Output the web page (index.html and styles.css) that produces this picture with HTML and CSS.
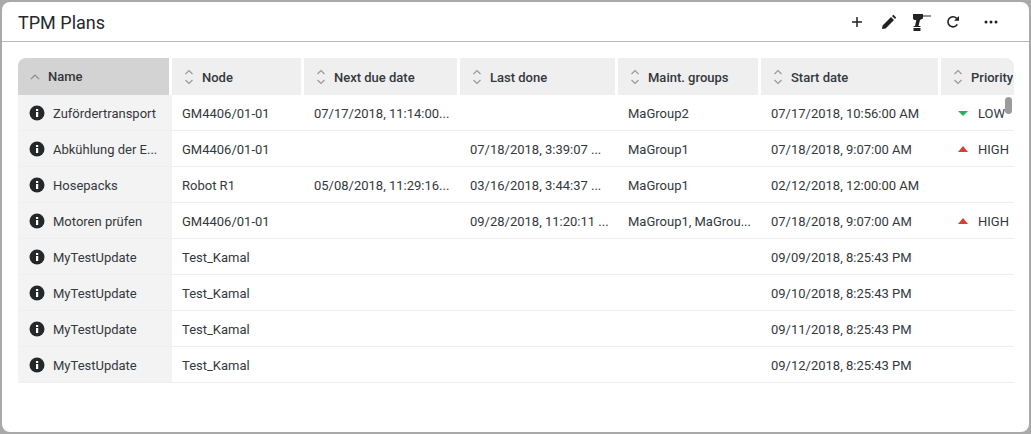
FILE: index.html
```html
<!doctype html>
<html>
<head>
<title>TPM Plans</title>
<link rel="stylesheet" href="styles.css">
</head>
<body>
<svg class="defs" width="0" height="0">
	<symbol id="sort" viewBox="0 0 10 18">
		<path d="M1.5 6 L5 2.5 L8.5 6 M1.5 12 L5 15.5 L8.5 12" fill="none" stroke="#999" stroke-width="1.2"/>
	</symbol>
	<symbol id="info" viewBox="0 0 16 16">
		<circle cx="8" cy="8" r="7.5" fill="#25282b"/>
		<rect x="7" y="7" width="2.2" height="5" fill="#fff"/>
		<rect x="7" y="4" width="2.2" height="2" fill="#fff"/>
	</symbol>
</svg>
<div class="card">
	<div class="head">
		<h1>TPM Plans</h1>
		<div class="tools">
			<svg class="add" width="12" height="12" viewBox="0 0 12 12"><path d="M6 1V11M1 6H11" stroke="#222" stroke-width="1.5"/></svg>
			<svg class="edit" width="16" height="16" viewBox="0 0 16 16"><path d="M1 15 L1.6 11.4 L10 3 L13 6 L4.6 14.4 Z M11 2 L12.4 0.8 L15.2 3.6 L14 5 Z" fill="#222"/></svg>
			<svg class="drill" width="20" height="18" viewBox="0 0 20 18"><path d="M1 0H11V1.6H19V2.4H11V4.5L8 6L6.5 12H8.5V13H1.6V12H3L4.3 6H2L1 4.5Z M1.5 14H8.5V17H1.5Z" fill="#222"/></svg>
			<svg class="reload" width="14" height="14" viewBox="0 0 14 14"><path d="M11.3 9.3 A5 5 0 1 1 10.6 3.4" fill="none" stroke="#222" stroke-width="1.6"/><path d="M8 5.8H13V1Z" fill="#222"/></svg>
			<svg class="more" width="14" height="4" viewBox="0 0 14 4"><circle cx="2" cy="2" r="1.5" fill="#222"/><circle cx="7" cy="2" r="1.5" fill="#222"/><circle cx="12" cy="2" r="1.5" fill="#222"/></svg>
		</div>
	</div>
	<div class="table">
		<div class="row toprow">
			<div class="th c1 sorted"><svg class="up" width="10" height="6" viewBox="0 0 10 6"><path d="M1 5 L5 1 L9 5" fill="none" stroke="#8d8d8d" stroke-width="1.2"/></svg><span>Name</span></div>
			<div class="th c2"><svg class="sort"><use href="#sort"/></svg><span>Node</span></div>
			<div class="th c3"><svg class="sort"><use href="#sort"/></svg><span>Next due date</span></div>
			<div class="th c4"><svg class="sort"><use href="#sort"/></svg><span>Last done</span></div>
			<div class="th c5"><svg class="sort"><use href="#sort"/></svg><span>Maint. groups</span></div>
			<div class="th c6"><svg class="sort"><use href="#sort"/></svg><span>Start date</span></div>
			<div class="th c7"><svg class="sort"><use href="#sort"/></svg><span>Priority</span></div>
		</div>
		<div class="row">
			<div class="td c1"><svg class="info"><use href="#info"/></svg><span class="txt">Zufördertransport</span></div>
			<div class="td c2"><span class="txt">GM4406/01-01</span></div>
			<div class="td c3"><span class="txt">07/17/2018, 11:14:00...</span></div>
			<div class="td c4"></div>
			<div class="td c5"><span class="txt">MaGroup2</span></div>
			<div class="td c6"><span class="txt">07/17/2018, 10:56:00 AM</span></div>
			<div class="td c7"><i class="low"></i><span>LOW</span></div>
		</div>
		<div class="row">
			<div class="td c1"><svg class="info"><use href="#info"/></svg><span class="txt">Abkühlung der E...</span></div>
			<div class="td c2"><span class="txt">GM4406/01-01</span></div>
			<div class="td c3"></div>
			<div class="td c4"><span class="txt">07/18/2018, 3:39:07 ...</span></div>
			<div class="td c5"><span class="txt">MaGroup1</span></div>
			<div class="td c6"><span class="txt">07/18/2018, 9:07:00 AM</span></div>
			<div class="td c7"><i class="high"></i><span>HIGH</span></div>
		</div>
		<div class="row">
			<div class="td c1"><svg class="info"><use href="#info"/></svg><span class="txt">Hosepacks</span></div>
			<div class="td c2"><span class="txt">Robot R1</span></div>
			<div class="td c3"><span class="txt">05/08/2018, 11:29:16...</span></div>
			<div class="td c4"><span class="txt">03/16/2018, 3:44:37 ...</span></div>
			<div class="td c5"><span class="txt">MaGroup1</span></div>
			<div class="td c6"><span class="txt">02/12/2018, 12:00:00 AM</span></div>
			<div class="td c7"></div>
		</div>
		<div class="row">
			<div class="td c1"><svg class="info"><use href="#info"/></svg><span class="txt">Motoren prüfen</span></div>
			<div class="td c2"><span class="txt">GM4406/01-01</span></div>
			<div class="td c3"></div>
			<div class="td c4"><span class="txt">09/28/2018, 11:20:11 ...</span></div>
			<div class="td c5"><span class="txt">MaGroup1, MaGrou...</span></div>
			<div class="td c6"><span class="txt">07/18/2018, 9:07:00 AM</span></div>
			<div class="td c7"><i class="high"></i><span>HIGH</span></div>
		</div>
		<div class="row">
			<div class="td c1"><svg class="info"><use href="#info"/></svg><span class="txt">MyTestUpdate</span></div>
			<div class="td c2"><span class="txt">Test_Kamal</span></div>
			<div class="td c3"></div>
			<div class="td c4"></div>
			<div class="td c5"></div>
			<div class="td c6"><span class="txt">09/09/2018, 8:25:43 PM</span></div>
			<div class="td c7"></div>
		</div>
		<div class="row">
			<div class="td c1"><svg class="info"><use href="#info"/></svg><span class="txt">MyTestUpdate</span></div>
			<div class="td c2"><span class="txt">Test_Kamal</span></div>
			<div class="td c3"></div>
			<div class="td c4"></div>
			<div class="td c5"></div>
			<div class="td c6"><span class="txt">09/10/2018, 8:25:43 PM</span></div>
			<div class="td c7"></div>
		</div>
		<div class="row">
			<div class="td c1"><svg class="info"><use href="#info"/></svg><span class="txt">MyTestUpdate</span></div>
			<div class="td c2"><span class="txt">Test_Kamal</span></div>
			<div class="td c3"></div>
			<div class="td c4"></div>
			<div class="td c5"></div>
			<div class="td c6"><span class="txt">09/11/2018, 8:25:43 PM</span></div>
			<div class="td c7"></div>
		</div>
		<div class="row">
			<div class="td c1"><svg class="info"><use href="#info"/></svg><span class="txt">MyTestUpdate</span></div>
			<div class="td c2"><span class="txt">Test_Kamal</span></div>
			<div class="td c3"></div>
			<div class="td c4"></div>
			<div class="td c5"></div>
			<div class="td c6"><span class="txt">09/12/2018, 8:25:43 PM</span></div>
			<div class="td c7"></div>
		</div>
		<div class="thumb"></div>
	</div>
</div>
</body>
</html>
```
FILE: styles.css
```css
html, body {
	height: 100%;
}
body {
	margin: 0;
	padding: 2px;
	box-sizing: border-box;
	background-color: #a9a9a9;
	font-family: Roboto, sans-serif;
	font-size: 13px;
	color: #33383c;
	overflow: hidden;
}
.defs {
	position: absolute;
}
.card {
	height: 100%;
	background: white;
	border-radius: 8px;
	overflow: hidden;
}
.head {
	display: flex;
	align-items: center;
	justify-content: space-between;
	height: 39px;
	border-bottom: 1px solid #b9b9b9;
	padding: 0 31px 0 16px;
}
h1 {
	margin: 2px 0 0;
	font-size: 18px;
	font-weight: 400;
	color: #25282b;
}
.tools {
	display: flex;
	align-items: center;
}
.add { margin-right: 18px; }
.edit { margin-right: 15px; }
.drill { margin: 2px 14px 0 0; }
.reload { margin-right: 24px; }
.table {
	position: relative;
	width: 996px;
	margin: 16px 0 0 16px;
	overflow: hidden;
	border-radius: 8px 8px 0 0;
}
.row {
	display: flex;
	height: 36px;
}
.toprow {
	height: 37px;
}
.th, .td {
	display: flex;
	align-items: center;
	flex: none;
	box-sizing: border-box;
}
.th {
	margin-right: 3px;
	background: #efefef;
	font-weight: 500;
	padding: 1px 0 0 12px;
	white-space: nowrap;
}
.td {
	border-bottom: 1px solid #efefef;
	padding: 1px 0 0 10px;
	white-space: nowrap;
}
.txt {
	overflow: hidden;
	text-overflow: ellipsis;
}
.th.c1 { width: 151px; background: #d3d3d3; padding: 0 0 0 12px; }
.th.c2 { width: 129px; }
.th.c3 { width: 153px; }
.th.c4 { width: 155px; }
.th.c5 { width: 140px; }
.th.c6 { width: 177px; }
.th.c7 { width: 73px; margin-right: 0; border-radius: 0 8px 0 0; overflow: hidden; }
.td.c1 { width: 154px; background: #f3f3f3; padding-left: 11px; }
.td.c2 { width: 132px; }
.td.c3 { width: 156px; }
.td.c4 { width: 158px; }
.td.c5 { width: 143px; }
.td.c6 { width: 180px; }
.td.c7 { width: 73px; padding-left: 17px; }
.sort {
	width: 10px;
	height: 18px;
	margin-right: 8px;
}
.up {
	margin-right: 8px;
}
.info {
	width: 16px;
	height: 16px;
	margin-right: 8px;
	flex: none;
}
.low, .high {
	width: 0;
	height: 0;
	margin-right: 10px;
	border-left: 5px solid transparent;
	border-right: 5px solid transparent;
}
.low {
	border-top: 5px solid #1fb45a;
}
.high {
	border-bottom: 6px solid #d9402f;
}
.thumb {
	position: absolute;
	top: 39px;
	right: 2px;
	width: 7px;
	height: 17px;
	border-radius: 4px;
	background: #9b9b9b;
}
```
